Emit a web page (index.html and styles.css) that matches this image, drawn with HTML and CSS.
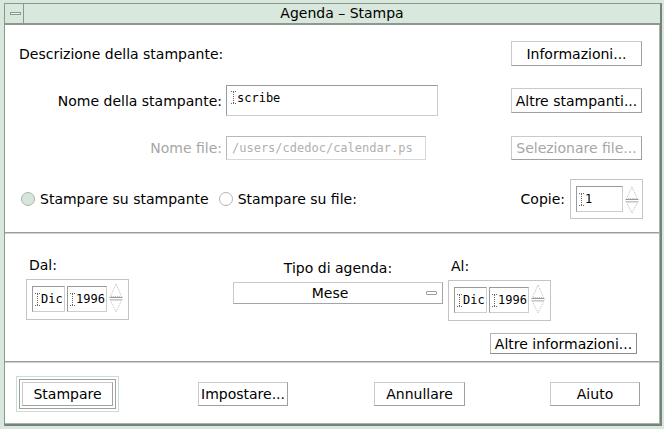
FILE: index.html
```html
<!DOCTYPE html>
<html>
<head>
<meta charset="utf-8">
<link rel="stylesheet" href="styles.css">
</head>
<body>
<div class="frame">
  <div class="window">
    <div class="titlebar">
      <div class="menu-box"><span class="min-glyph"></span></div>
      <div class="title">Agenda – Stampa</div>
    </div>
    <div class="content">
      <section class="sec-printer">
        <div class="row row1">
          <span class="desc">Descrizione della stampante:</span>
          <button class="btn btn-side">Informazioni...</button>
        </div>
        <div class="row row2">
          <span class="label-right">Nome della stampante:</span>
          <div class="field field-printer"><svg class="caret" width="5" height="13" viewBox="0 0 5 13"><path d="M0 0.5H5M0 12.5H5M2.5 1V12" stroke="#666" stroke-dasharray="1 1" fill="none"/></svg><span>scribe</span></div>
          <button class="btn btn-side">Altre stampanti...</button>
        </div>
        <div class="row row3">
          <span class="label-right disabled">Nome file:</span>
          <div class="field field-file disabled"><span>/users/cdedoc/calendar.ps</span></div>
          <button class="btn btn-side disabled">Selezionare file...</button>
        </div>
        <div class="row row4">
          <span class="radio on"></span><span class="radio-text">Stampare su stampante</span>
          <span class="radio radio2"></span><span class="radio-text">Stampare su file:</span>
          <span class="copies-label">Copie:</span>
          <div class="spin spin-copies">
            <div class="field sfield w-copies"><svg class="caret" width="5" height="13" viewBox="0 0 5 13"><path d="M0 0.5H5M0 12.5H5M2.5 1V12" stroke="#666" stroke-dasharray="1 1" fill="none"/></svg><span>1</span></div>
            <svg class="arrows" width="14" height="28" viewBox="0 0 14 28"><path d="M7 1L1.5 12.5H12.5Z" fill="none" stroke="#bbb" stroke-dasharray="1 1"/><path d="M0.5 13.5H13.5" stroke="#9a9a9a"/><path d="M0.5 15.5H13.5" stroke="#c8c8c8"/><path d="M1.5 16.5H12.5L7 27Z" fill="none" stroke="#bbb" stroke-dasharray="1 1"/></svg>
          </div>
        </div>
      </section>
      <div class="sep"></div>
      <section class="sec-range">
        <div class="range-row">
          <div class="group group-from">
            <div class="glabel">Dal:</div>
            <div class="spin spin-date">
              <div class="field sfield w-month"><svg class="caret" width="5" height="13" viewBox="0 0 5 13"><path d="M0 0.5H5M0 12.5H5M2.5 1V12" stroke="#666" stroke-dasharray="1 1" fill="none"/></svg><span>Dic</span></div>
              <div class="field sfield w-year"><svg class="caret" width="5" height="13" viewBox="0 0 5 13"><path d="M0 0.5H5M0 12.5H5M2.5 1V12" stroke="#666" stroke-dasharray="1 1" fill="none"/></svg><span>1996</span></div>
              <svg class="arrows" width="14" height="30" viewBox="0 0 14 30"><path d="M7 1L1.5 13.5H12.5Z" fill="none" stroke="#bbb" stroke-dasharray="1 1"/><path d="M0.5 14.5H13.5" stroke="#9a9a9a"/><path d="M0.5 16.5H13.5" stroke="#c8c8c8"/><path d="M1.5 17.5H12.5L7 29Z" fill="none" stroke="#bbb" stroke-dasharray="1 1"/></svg>
            </div>
          </div>
          <div class="group group-type">
            <div class="glabel center">Tipo di agenda:</div>
            <div class="dropdown"><span class="dropdown-text">Mese</span><span class="dropdown-ind"></span></div>
          </div>
          <div class="group group-to">
            <div class="glabel">Al:</div>
            <div class="spin spin-date">
              <div class="field sfield w-month"><svg class="caret" width="5" height="13" viewBox="0 0 5 13"><path d="M0 0.5H5M0 12.5H5M2.5 1V12" stroke="#666" stroke-dasharray="1 1" fill="none"/></svg><span>Dic</span></div>
              <div class="field sfield w-year"><svg class="caret" width="5" height="13" viewBox="0 0 5 13"><path d="M0 0.5H5M0 12.5H5M2.5 1V12" stroke="#666" stroke-dasharray="1 1" fill="none"/></svg><span>1996</span></div>
              <svg class="arrows" width="14" height="30" viewBox="0 0 14 30"><path d="M7 1L1.5 13.5H12.5Z" fill="none" stroke="#bbb" stroke-dasharray="1 1"/><path d="M0.5 14.5H13.5" stroke="#9a9a9a"/><path d="M0.5 16.5H13.5" stroke="#c8c8c8"/><path d="M1.5 17.5H12.5L7 29Z" fill="none" stroke="#bbb" stroke-dasharray="1 1"/></svg>
            </div>
          </div>
        </div>
        <div class="more-row">
          <button class="btn btn-more">Altre informazioni...</button>
        </div>
      </section>
      <div class="sep"></div>
      <section class="sec-actions">
        <div class="default-ring"><div class="default-inner"><button class="btn btn-action w91">Stampare</button></div></div>
        <button class="btn btn-action w90 m-imp">Impostare...</button>
        <button class="btn btn-action w91 m-ann">Annullare</button>
        <button class="btn btn-action w90 m-aiu">Aiuto</button>
      </section>
    </div>
  </div>
</div>
</body>
</html>
```
FILE: styles.css
```css
html, body {
  margin: 0;
  padding: 0;
}
body {
  background: #d8e8dc;
  font-family: "DejaVu Sans", sans-serif;
  font-size: 14px;
  line-height: 16px;
  color: #000;
}
.frame {
  width: 664px;
  height: 429px;
  box-sizing: border-box;
  padding: 3px 2px 3px 4px;
}
.window {
  height: 100%;
  box-sizing: border-box;
  border-top: 1px solid #8b978f;
  border-left: 1px solid #8b978f;
  border-right: 2px solid #76827a;
  border-bottom: 2px solid #76827a;
  display: flex;
  flex-direction: column;
}
.titlebar {
  height: 19px;
  flex: none;
  border-bottom: 2px solid #8b978f;
  display: flex;
  background: #d8e8dc;
}
.menu-box {
  width: 18px;
  border-right: 1px solid #8b978f;
  display: flex;
  align-items: center;
  justify-content: center;
}
.min-glyph {
  display: block;
  width: 9px;
  height: 1px;
  border: 1px solid #8b978f;
  background: #eef4ef;
  margin-left: 2px;
}
.title {
  flex: 1;
  text-align: center;
  line-height: 19px;
}
.content {
  flex: 1;
  background: #fff;
  border-right: 1px solid #a9b3ac;
  border-bottom: 1px solid #a9b3ac;
  display: flex;
  flex-direction: column;
}
.sec-printer {
  height: 207px;
  box-sizing: border-box;
  padding-top: 16px;
  flex: none;
}
.row {
  display: flex;
  align-items: center;
  padding-left: 14px;
  padding-right: 17px;
}
.row1 { height: 25px; }
.row2 { height: 31px; margin-top: 19px; }
.row3 { height: 24px; margin-top: 20px; }
.row4 { height: 40px; margin-top: 19px; padding-left: 16px; padding-right: 16px; }
.desc { flex: 1; }
.label-right {
  width: 203px;
  text-align: right;
  flex: none;
}
.disabled { color: #a6a6a6; }
.btn {
  box-sizing: border-box;
  font: inherit;
  line-height: 16px;
  background: #fff;
  color: #000;
  border: 1px solid;
  border-color: #cacaca #a0a0a0 #a0a0a0 #cacaca;
  padding: 0;
  margin: 0;
  text-align: center;
  white-space: nowrap;
}
.btn.disabled { color: #a6a6a6; }
.btn-side {
  width: 131px;
  height: 25px;
  margin-left: auto;
}
.row3 .btn-side { height: 24px; }
.field {
  box-sizing: border-box;
  border: 1px solid;
  border-color: #9a9a9a #cdcdcd #cdcdcd #9a9a9a;
  font-family: "DejaVu Sans Mono", monospace;
  font-size: 12px;
  line-height: 14px;
  display: flex;
  align-items: center;
  background: #fff;
}
.caret { flex: none; margin-right: 1px; }
.field-printer {
  width: 212px;
  height: 31px;
  margin-left: 4px;
  align-items: flex-start;
  padding: 5px 4px;
}
.field-file {
  width: 200px;
  height: 24px;
  margin-left: 4px;
  padding: 0 5px;
  color: #b0b0b0;
  border-color: #b8b8b8 #d8d8d8 #d8d8d8 #b8b8b8;
}
.radio {
  width: 14px;
  height: 14px;
  box-sizing: border-box;
  border-radius: 50%;
  border: 1px solid #b4b4b4;
  background: #fff;
  flex: none;
}
.radio.on {
  background: #d5e7da;
  border-color: #a9b6ad;
}
.radio2 { margin-left: 10px; }
.radio-text { margin-left: 5px; }
.copies-label { margin-left: auto; margin-right: 5px; }
.spin {
  box-sizing: border-box;
  border: 1px solid #c4c4c4;
  display: flex;
  align-items: flex-start;
  background: #fff;
}
.spin-copies {
  width: 73px;
  height: 40px;
  padding: 6px 0 0 5px;
}
.sfield {
  height: 26px;
  padding: 0 2px;
  flex: none;
}
.w-copies { width: 47px; }
.w-month { width: 33px; }
.w-year { width: 40px; margin-left: 2px; }
.arrows { flex: none; margin-left: 2px; }
.spin-copies .arrows { margin-top: 0; }
.sep {
  flex: none;
  border-top: 1px solid #9d9d9d;
  border-bottom: 1px solid #cfcfcf;
}
.sec-range {
  height: 127px;
  box-sizing: border-box;
  padding-top: 23px;
  flex: none;
}
.range-row {
  display: flex;
  align-items: flex-start;
  padding-left: 21px;
}
.glabel {
  height: 16px;
  padding-left: 3px;
  margin-bottom: 6px;
}
.glabel.center { text-align: center; padding-left: 0; }
.group-from { width: 103px; }
.spin-date {
  width: 103px;
  height: 41px;
  padding: 6px 0 0 5px;
}
.spin-date .arrows { margin-top: -3px; }
.group-type {
  width: 210px;
  margin-left: 104px;
  margin-top: 3px;
}
.dropdown {
  box-sizing: border-box;
  height: 22px;
  border: 1px solid;
  border-color: #cacaca #a4a4a4 #a4a4a4 #cacaca;
  display: flex;
  align-items: center;
}
.dropdown-text { flex: 1; text-align: center; }
.dropdown-ind {
  width: 11px;
  height: 4px;
  box-sizing: border-box;
  border: 1px solid #9c9c9c;
  border-radius: 1px;
  margin-right: 5px;
}
.group-to {
  width: 103px;
  margin-left: 5px;
  margin-top: 1px;
}
.more-row {
  display: flex;
  justify-content: flex-end;
  padding-right: 22px;
  margin-top: 12px;
}
.btn-more {
  width: 147px;
  height: 21px;
  border-color: #b4b4b4 #8c8c8c #8c8c8c #b4b4b4;
}
.sec-actions {
  flex: 1;
  display: flex;
  align-items: flex-start;
  padding-top: 13px;
  padding-left: 11px;
}
.default-ring {
  border: 1px solid #c8dfce;
  padding: 2px;
}
.default-inner {
  border: 1px solid #a0a0a0;
  padding: 2px;
}
.btn-action {
  height: 24px;
}
.sec-actions > .btn-action { margin-top: 6px; }
.w91 { width: 91px; }
.w90 { width: 90px; }
.m-imp { margin-left: 79px; }
.m-ann { margin-left: 86px; }
.m-aiu { margin-left: 85px; }
```
